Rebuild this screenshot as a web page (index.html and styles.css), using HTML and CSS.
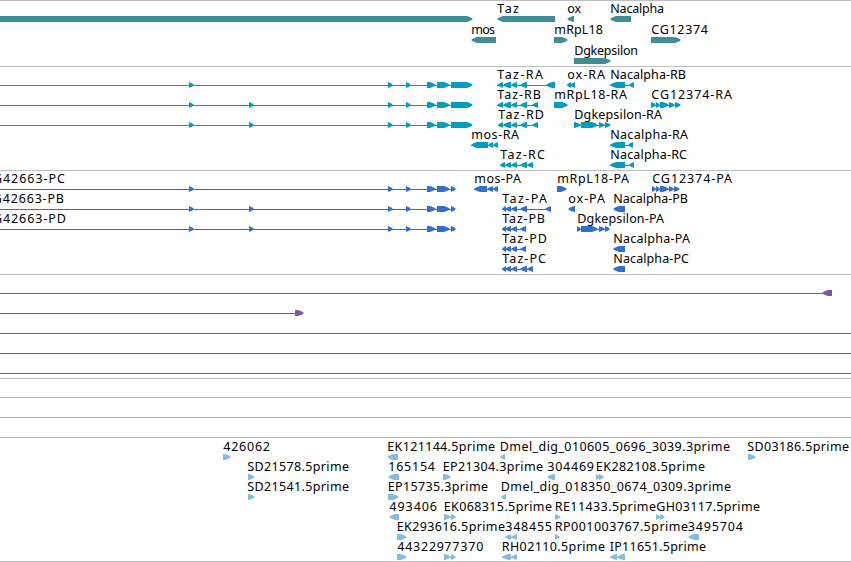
FILE: index.html
```
<!DOCTYPE html>
<html lang="en">
<head>
  <meta charset="UTF-8">
  <title>Genome browser</title>
  <link rel="stylesheet" href="styles.css">
</head>
<body>
  <main class="browser">
    <section class="track genes" id="genes"></section>
    <section class="track transcripts" id="transcripts"></section>
    <section class="track proteins" id="proteins"></section>
    <section class="track insertions" id="insertions"></section>
    <section class="track ests" id="ests"></section>
  </main>
  <script src="tracks.js"></script>
</body>
</html>
```

FILE: styles.css
```
body {
  margin: 0;
  background: #ffffff;
  overflow: hidden;
}

.browser {
  display: flex;
  flex-direction: column;
  width: 851px;
  border-bottom: 1px solid #bebebe;
}

.track {
  box-sizing: border-box;
  border-top: 1px solid #bebebe;
  overflow: hidden;
}

.track svg {
  display: block;
  width: 100%;
  height: 100%;
}

.track text {
  font-family: "Noto Sans", "DejaVu Sans", sans-serif;
  font-size: 12.5px;
  fill: #000000;
}

.genes {
  height: 66px;
  color: #408d93;
}

.transcripts {
  height: 104px;
  color: #009dbf;
}

.proteins {
  height: 104px;
  color: #306fd0;
}

.insertions {
  height: 104px;
  color: #7759a9;
}

.ests {
  height: 183px;
  color: #87bbde;
}

.exon {
  fill: currentColor;
}

.intron {
  fill: currentColor;
  shape-rendering: crispEdges;
}
```

FILE: tracks.js
```
// feature: [row, strand, exons, label, label end, label start]
const taz = [[503, 511], [511, 517], [520, 527]];
const tazP = [[502, 506], [505, 511], [511, 517]];
const cgExons = [[388, 393], [406, 411], [427, 436], [437, 450]];

const tracks = {
  genes: [
    [0, "+", [[-10, 473]]],
    [0, "-", [[497, 555]], "Taz", 519],
    [0, "-", [[567, 574]], "ox", 581],
    [0, "-", [[610, 631]], "Nacalpha", 664],
    [1, "-", [[471, 496]], "mos", 495],
    [1, "+", [[554, 568]], "mRpL18", 603],
    [1, "+", [[651, 681]], "CG12374", 708],
    [2, "+", [[574, 611]], "Dgkepsilon", 638]
  ],
  transcripts: [
    [0, "+", [[-10, -5], [189, 194], ...cgExons, [451, 473]]],
    [1, "+", [[-10, -5], [189, 194], [249, 254], ...cgExons, [451, 473]]],
    [2, "+", [[-10, -5], [189, 194], [249, 254], ...cgExons, [451, 473]]],
    [0, "-", [[497, 503], ...taz, [546, 555]], "Taz-RA", 543],
    [1, "-", [[497, 503], ...taz, [532, 538]], "Taz-RB", 541],
    [2, "-", [[498, 503], ...taz, [532, 538]], "Taz-RD", 544],
    [4, "-", [[500, 505], [505, 511], [511, 517], [520, 527], [527, 533]], "Taz-RC", 545],
    [3, "-", [[471, 488], [488, 493], [493, 498]], "mos-RA", 519],
    [0, "-", [[567, 571], [570, 575]], "ox-RA", 605],
    [1, "+", [[554, 568]], "mRpL18-RA", 627],
    [2, "+", [[574, 581], [581, 598], [599, 605], [605, 611]], "Dgkepsilon-RA", 662],
    [0, "-", [[610, 625], [629, 634]], "Nacalpha-RB", 686],
    [3, "-", [[610, 625], [628, 633]], "Nacalpha-RA", 688],
    [4, "-", [[610, 625], [629, 634]], "Nacalpha-RC", 687],
    [1, "+", [[651, 656], [656, 660], [660, 669], [669, 675], [675, 681]], "CG12374-RA", 732]
  ],
  proteins: [
    [0, "+", [[-16, -10], [189, 194], ...cgExons, [451, 456]], "CG42663-PC", 65],
    [1, "+", [[-16, -10], [189, 194], [249, 254], ...cgExons, [451, 456]], "CG42663-PB", 64],
    [2, "+", [[-16, -10], [189, 194], [249, 254], ...cgExons, [451, 456]], "CG42663-PD", 66],
    [0, "-", [[474, 487], [487, 493], [493, 498]], "mos-PA", 521],
    [0, "+", [[557, 567]], "mRpL18-PA", 629],
    [0, "+", [[652, 656], [656, 660], [660, 669], [669, 674], [674, 680]], "CG12374-PA", 732],
    [1, "-", [...tazP, [520, 527], [545, 551]], "Taz-PA", 547],
    [2, "-", [...tazP, [520, 526]], "Taz-PB", 545],
    [3, "-", [...tazP, [520, 526]], "Taz-PD", 547],
    [4, "-", [...tazP, [520, 527], [527, 533]], "Taz-PC", 546],
    [1, "-", [[568, 575]], "ox-PA", 605],
    [2, "+", [[577, 581], [581, 598], [599, 605], [605, 610]], "Dgkepsilon-PA", 664],
    [1, "-", [[613, 625]], "Nacalpha-PB", 688],
    [3, "-", [[613, 625]], "Nacalpha-PA", 690],
    [4, "-", [[613, 625]], "Nacalpha-PC", 689]
  ],
  insertions: [
    [0, "-", [[-10, -5], [822, 832]]],
    [1, "+", [[-10, -5], [295, 304]]],
    [2, "+", [[-10, -5], [860, 865]]],
    [3, "+", [[-10, -5], [860, 865]]],
    [4, "+", [[-10, -5], [860, 865]]]
  ],
  ests: [
    [0, "+", [[-10, -5], [860, 865]]],
    [1, "+", [[-10, -5], [860, 865]]],
    [2, "+", [[-10, -5], [860, 865]]],
    [3, "+", [[223, 231]], "426062", 270],
    [3, "-", [[387, 398]], "EK121144.5prime", 495],
    [3, "-", [[500, 505]], "Dmel_dig_010605_0696_3039.3prime", 730, 499.5],
    [3, "+", [[748, 756]], "SD03186.5prime", 849, 747],
    [4, "+", [[248, 255]], "SD21578.5prime", 349, 247],
    [4, "-", [[388, 399]], "165154", 435],
    [4, "+", [[443, 451]], "EP21304.3prime", 543, 442.5],
    [4, "-", [[547, 555]], "304469", 594],
    [4, "+", [[596, 600], [599, 604]], "EK282108.5prime", 705, 595.5],
    [5, "+", [[248, 255]], "SD21541.5prime", 349, 247],
    [5, "+", [[388, 399]], "EP15735.3prime", 488, 387.5],
    [5, "-", [[501, 506]], "Dmel_dig_018350_0674_0309.3prime", 731, 500.5],
    [6, "-", [[389, 399]], "493406", 437],
    [6, "+", [[444, 451], [451, 456]], "EK068315.5prime", 552, 443.5],
    [6, "+", [[555, 561]], "RE11433.5prime", 656, 554.5],
    [6, "+", [[656, 660], [660, 665]], "GH03117.5prime", 760],
    [7, "+", [[397, 407]], "EK293616.5prime", 505, 396.5],
    [7, "-", [[505, 511], [511, 517]], "348455", 552],
    [7, "+", [[555, 560]], "RP001003767.5prime", 688, 554.5],
    [7, "-", [[688, 699]], "3495704", 743, 687.5],
    [8, "+", [[397, 407]], "443229", 444],
    [8, "+", [[444, 451], [451, 456]], "77370", 483.5],
    [8, "-", [[502, 511], [511, 517]], "RH02110.5prime", 605, 501.5],
    [8, "-", [[610, 617], [617, 625]], "IP11651.5prime", 706, 609.5]
  ]
};

// arrow shaped box, 6px high
function exon(x1, x2, y, strand) {
  const head = Math.min(6, x2 - x1);
  const tip = strand === "+" ? x2 : x1;
  const back = strand === "+" ? x1 : x2;
  const dir = strand === "+" ? -1 : 1;
  const neck = tip + dir * head;
  const bend = tip + dir * head * 0.35;
  const points = [
    [back, y], [neck, y], [bend, y + 1.6], [tip, y + 3],
    [bend, y + 4.4], [neck, y + 6], [back, y + 6]
  ];
  return `<polygon class="exon" points="${points.join(" ")}"/>`;
}

function drawTrack(id, rowHeight) {
  let shapes = "";
  let labels = "";
  tracks[id].forEach(([row, strand, exons, label, end, start]) => {
    const y = 15 + row * rowHeight;
    const from = exons[0][0];
    const to = exons[exons.length - 1][1];
    if (exons.length > 1) {
      shapes += `<rect class="intron" x="${from}" y="${y + 3}" width="${to - from - 2}" height="1"/>`;
    }
    exons.forEach(([x1, x2]) => {
      shapes += exon(x1, x2, y, strand);
    });
    if (label) {
      const x = (start || from) + 0.3;
      labels += `<text x="${x}" y="${y - 3}" textLength="${end - x}">${label}</text>`;
    }
  });
  document.getElementById(id).innerHTML = `<svg>${shapes}${labels}</svg>`;
}

drawTrack("genes", 21);
drawTrack("transcripts", 20);
drawTrack("proteins", 20);
drawTrack("insertions", 20);
drawTrack("ests", 20);
```
